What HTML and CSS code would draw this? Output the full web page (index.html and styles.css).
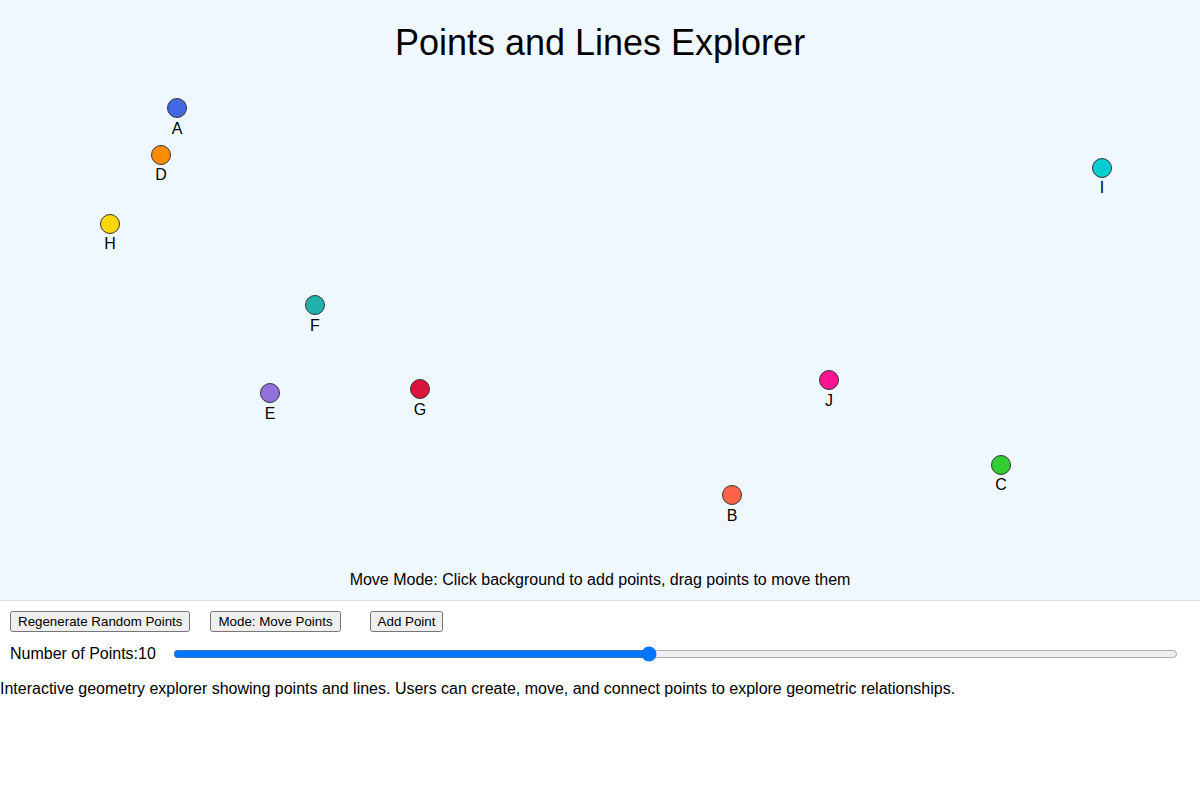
FILE: index.html
```html
<!DOCTYPE html>
<html lang="en">
<head>
    <meta charset="UTF-8">
    <meta name="viewport" content="width=device-width, initial-scale=1.0">
    <title>Points and Lines Explorer</title>
    <link rel="stylesheet" href="styles.css">
</head>
<body>
    <div class="canvas-wrap">
        <svg class="canvas" width="1200" height="600" viewBox="0 0 1200 600">
            <text class="title" x="600" y="55">Points and Lines Explorer</text>

            <g class="point"><circle cx="177" cy="108" r="9.5" fill="#4169e1"/><text x="177" y="134">A</text></g>
            <g class="point"><circle cx="732" cy="495" r="9.5" fill="#ff6347"/><text x="732" y="521">B</text></g>
            <g class="point"><circle cx="1001" cy="465" r="9.5" fill="#32cd32"/><text x="1001" y="490">C</text></g>
            <g class="point"><circle cx="161" cy="155" r="9.5" fill="#ff8c00"/><text x="161" y="180">D</text></g>
            <g class="point"><circle cx="270" cy="393" r="9.5" fill="#9370db"/><text x="270" y="419">E</text></g>
            <g class="point"><circle cx="315" cy="305" r="9.5" fill="#20b2aa"/><text x="315" y="331">F</text></g>
            <g class="point"><circle cx="420" cy="389" r="9.5" fill="#dc143c"/><text x="420" y="415">G</text></g>
            <g class="point"><circle cx="110" cy="224" r="9.5" fill="#ffd700"/><text x="110" y="249">H</text></g>
            <g class="point"><circle cx="1102" cy="168" r="9.5" fill="#00ced1"/><text x="1102" y="193">I</text></g>
            <g class="point"><circle cx="829" cy="380" r="9.5" fill="#ff1493"/><text x="829" y="406">J</text></g>

            <text class="mode-text" x="600" y="585">Move Mode: Click background to add points, drag points to move them</text>
        </svg>
    </div>

    <div class="controls">
        <div class="button-row">
            <button class="btn">Regenerate Random Points</button>
            <button class="btn btn-mode">Mode: Move Points</button>
            <button class="btn">Add Point</button>
        </div>
        <div class="slider-row">
            <label for="pointCount">Number of Points:<span id="pointValue">10</span></label>
            <input type="range" id="pointCount" min="1" max="20" value="10">
        </div>
    </div>

    <p class="description">Interactive geometry explorer showing points and lines. Users can create, move, and connect points to explore geometric relationships.</p>
</body>
</html>
```

FILE: styles.css
```css
body {
    margin: 0;
    font-family: "Liberation Sans", Arial, sans-serif;
    color: #000;
    background-color: #fff;
}
.canvas-wrap {
    background-color: #f0f8ff;
    border-bottom: 1px solid #dddddd;
    height: 600px;
}
.canvas {
    display: block;
}
.title {
    font-size: 36px;
    text-anchor: middle;
    fill: #000;
}
.point circle {
    stroke: #333;
    stroke-width: 1;
}
.point text {
    font-size: 16px;
    text-anchor: middle;
    fill: #000;
}
.mode-text {
    font-size: 16px;
    text-anchor: middle;
    fill: #000;
}
.controls {
    padding: 10px;
}
.button-row {
    display: flex;
    align-items: center;
}
.btn {
    font-family: "Liberation Sans", Arial, sans-serif;
    font-size: 13.33px;
    margin-right: 20px;
}
.btn-mode {
    margin-right: 29px;
}
.slider-row {
    display: flex;
    align-items: center;
    margin-top: 12px;
    font-size: 16px;
}
.slider-row input[type="range"] {
    flex: 1;
    margin-left: 17px;
    margin-right: 12px;
}
.description {
    margin: 6px 0 0;
    font-size: 16px;
}
```
